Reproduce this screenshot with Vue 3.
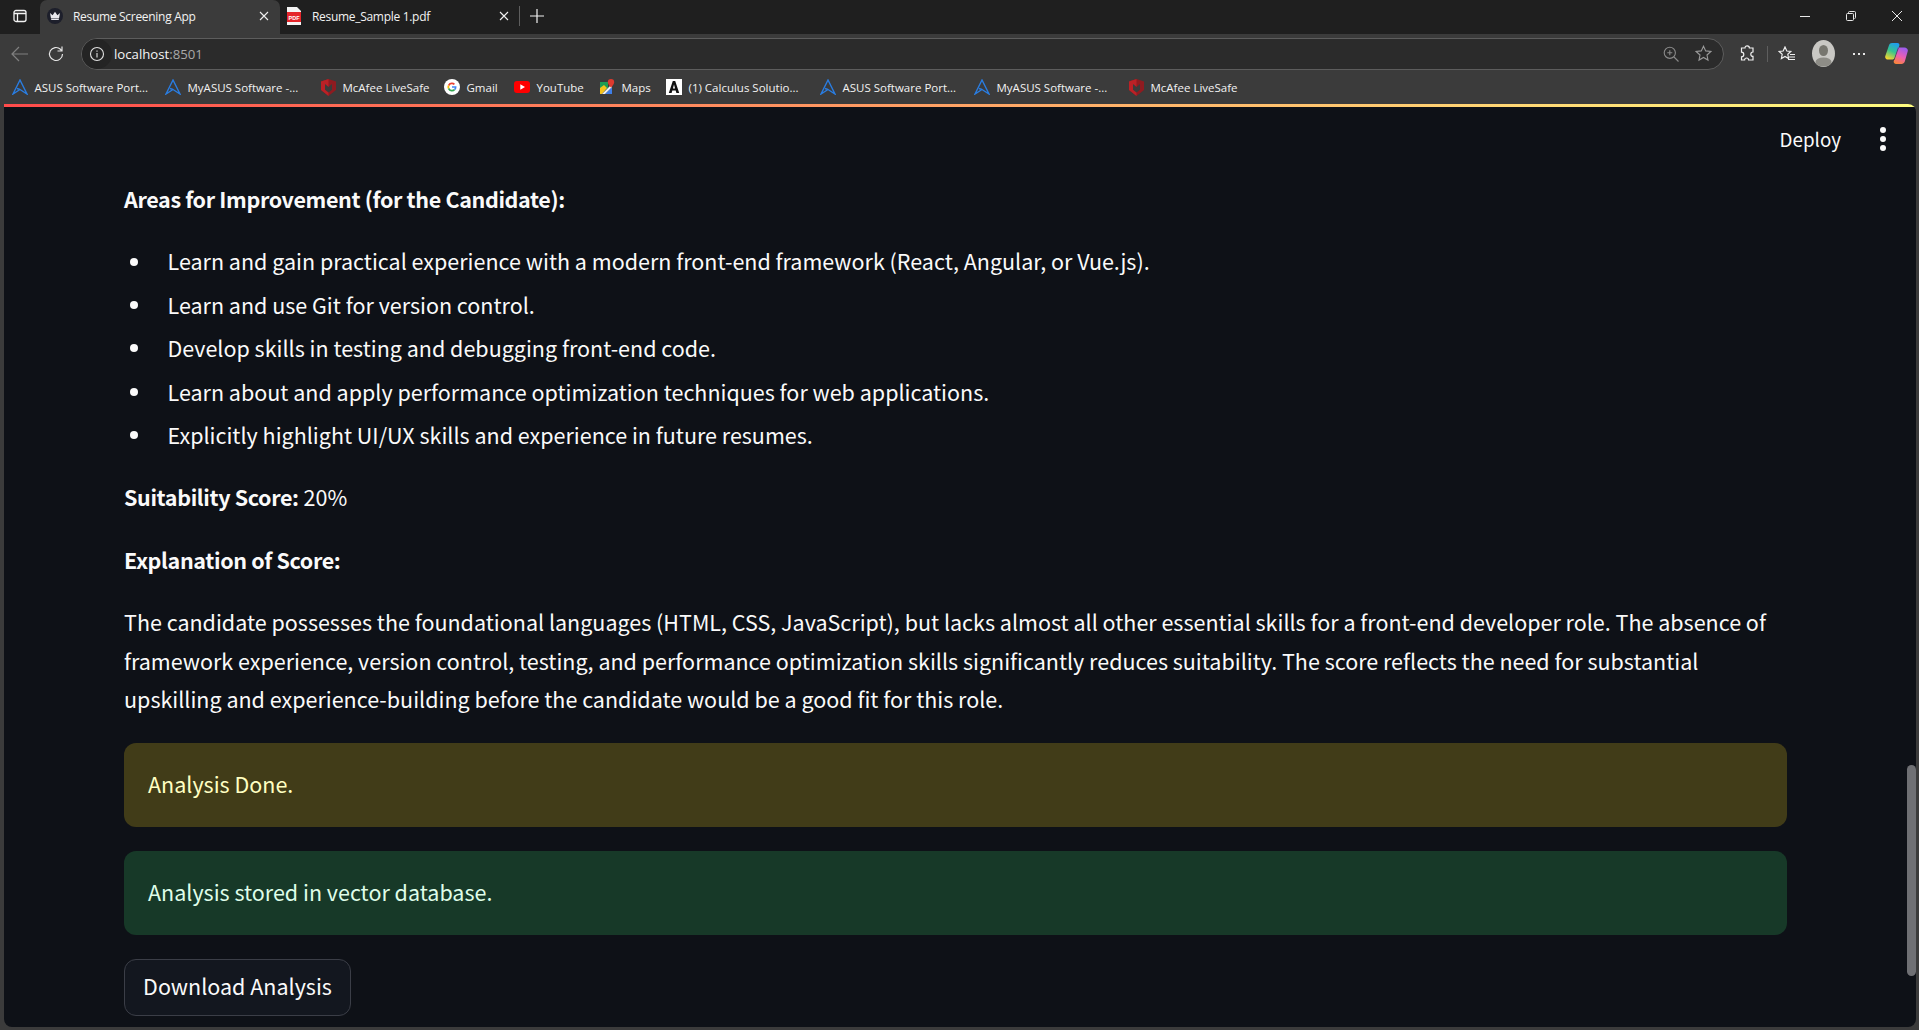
<template>
  <div class="window">
    <!-- tab strip -->
    <div class="tabstrip">
      <div class="tabmenu">
        <svg width="16" height="16" viewBox="0 0 16 16" fill="none" stroke="#f2f2f2" stroke-width="1.3"><rect x="2" y="2.500" width="12" height="11" rx="2"/><path d="M2 5.500h12M5.500 5.500v8" /></svg>
      </div>
      <div class="tab active">
        <span class="crown">
          <svg width="12" height="10" viewBox="0 0 12 10" fill="#e8e8ee"><path d="M1 2l2.600 2.200L6 .8l2.400 3.400L11 2l-1 5.400H2zM2.200 8h7.600v1H2.200z"/></svg>
        </span>
        <span class="tabtitle">Resume Screening App</span>
        <svg class="tabx" width="10" height="10" viewBox="0 0 10 10" stroke="#f0f0f0" stroke-width="1.1"><path d="M1 1l8 8M9 1l-8 8"/></svg>
      </div>
      <div class="tab">
        <svg width="16" height="18" viewBox="0 0 16 18"><path d="M1 0h10l4 4v14H1z" fill="#f4f4f4"/><rect x="1" y="5" width="14" height="10" fill="#e5252a"/><text x="8" y="12.600" class="pdftext" text-anchor="middle">PDF</text></svg>
        <span class="tabtitle">Resume_Sample 1.pdf</span>
        <svg class="tabx" width="10" height="10" viewBox="0 0 10 10" stroke="#f0f0f0" stroke-width="1.1"><path d="M1 1l8 8M9 1l-8 8"/></svg>
      </div>
      <div class="tabsep"></div>
      <svg class="newtab" width="14" height="14" viewBox="0 0 14 14" stroke="#f2f2f2" stroke-width="1.2"><path d="M7 0v14M0 7h14"/></svg>
      <div class="spacer"></div>
      <div class="winbtns">
        <svg width="10" height="10" viewBox="0 0 10 10" stroke="#e8e8e8"><path d="M0 5.500h10"/></svg>
        <svg width="10" height="10" viewBox="0 0 10 10" fill="none" stroke="#e8e8e8"><rect x=".5" y="2.500" width="7" height="7" rx="1"/><path d="M2.500 2.500V1.500q0-1 1-1h5q1 0 1 1v5q0 1-1 1"/></svg>
        <svg width="10" height="10" viewBox="0 0 10 10" stroke="#e8e8e8"><path d="M0 0l10 10M10 0L0 10"/></svg>
      </div>
    </div>

    <!-- address bar -->
    <div class="toolbar">
      <svg class="back" width="18" height="16" viewBox="0 0 18 16" fill="none" stroke="#808080" stroke-width="1.2"><path d="M17 8H1M8 1L1 8l7 7"/></svg>
      <svg class="reload" width="18" height="18" viewBox="0 0 18 18" fill="none" stroke="#e6e6e6" stroke-width="1.2"><path d="M15.500 9a6.500 6.500 0 1 1-2-4.700L15 6M15 1.500V6h-4.500"/></svg>
      <div class="addr">
        <span class="infoicon">
          <svg width="16" height="16" viewBox="0 0 16 16" fill="none" stroke="#e0e0e0" stroke-width="1.1"><circle cx="8" cy="8" r="6.500"/><path d="M8 7v4.500M8 4.500v1.200"/></svg>
        </span>
        <span class="url">localhost<span class="port">:8501</span></span>
        <div class="spacer"></div>
        <svg class="addricon" width="16" height="16" viewBox="0 0 16 16" fill="none" stroke="#8a8a8a" stroke-width="1.1"><circle cx="6.800" cy="6.800" r="5.600"/><path d="M11 11l4.500 4.500M4.300 6.800h5M6.800 4.300v5"/></svg>
        <svg class="addricon star" width="17" height="17" viewBox="0 0 17 17" fill="none" stroke="#9a9a9a" stroke-width="1.1"><path d="M8.500 1.200l2.200 4.700 5.100.6-3.800 3.500 1 5.100-4.500-2.600L4 15.100l1-5.100L1.200 6.500l5.100-.6z"/></svg>
      </div>
      <svg class="puzzle" width="16" height="18" viewBox="0 0 16 18" fill="none" stroke="#efefef" stroke-width="1.2"><path d="M6 3a2.200 2.200 0 0 1 4.400 0h3.600v4a2.200 2.200 0 0 0 0 4.400v3.600H9.600a2 2 0 0 0-4 0H2.500v-3.200a2.200 2.200 0 0 0 0-4.600V3z"/></svg>
      <div class="toolsep"></div>
      <svg class="favs" width="18" height="16" viewBox="0 0 18 16" fill="none" stroke="#efefef" stroke-width="1.2"><path d="M7 1l1.800 4 4 .5-3 2.800.8 4.200L7 10.400 3.400 12.500l.8-4.200-3-2.800 4-.5zM12 8.500h5M11 11h6M10 13.500h7"/></svg>
      <span class="avatar">
        <svg width="23" height="27" viewBox="0 0 23 27"><ellipse cx="11.500" cy="13.500" rx="11.500" ry="13.500" fill="#c9c8c4"/><ellipse cx="11.500" cy="10.500" rx="4.500" ry="5.500" fill="#77766f"/><ellipse cx="11.500" cy="22" rx="8" ry="4.500" fill="#8e8d87"/></svg>
      </span>
      <span class="dots"><i></i><i></i><i></i></span>
      <svg class="copilot" width="23" height="21" viewBox="0 0 23 21">
        <defs>
          <linearGradient id="cpa" x1="0.700" y1="0" x2="0.300" y2="1"><stop offset="0" stop-color="#1f9df0"/><stop offset="0.500" stop-color="#35c48f"/><stop offset="1" stop-color="#f3d52f"/></linearGradient>
          <linearGradient id="cpc" x1="0.700" y1="0" x2="0.300" y2="1"><stop offset="0" stop-color="#9a5cf0"/><stop offset="0.550" stop-color="#ee5fb0"/><stop offset="1" stop-color="#f8843c"/></linearGradient>
        </defs>
        <path d="M7 0h5.500c1.500 0 2.300 1.300 1.800 2.700L10 14.500c-.5 1.400-1.500 2-3 2H3c-2 0-3.300-1.700-2.700-3.500L4 2.300C4.500.8 5.500 0 7 0z" fill="url(#cpa)"/>
        <path d="M13 4.500h6.500c2 0 3.700 1.700 3.300 3.500l-3 10.500c-.5 1.600-1.700 2.500-3.300 2.500h-5.500c-1.700 0-2.700-1.400-2.200-3L13 4.500z" fill="url(#cpc)"/>
        <path d="M13 4.500l-4 11.500c-.3.500-1 .5-1.300.5l1.800.4L13.800 5z" fill="#23304f" opacity="0.700"/>
      </svg>
    </div>

    <!-- bookmarks -->
    <div class="bookmarks">
      <div v-for="b in bookmarks" :key="b.id" class="bm" :style="{ width: b.w + 'px' }">
        <svg v-if="b.icon === 'asus'" width="16" height="16" viewBox="0 0 16 16" fill="none" stroke="#2a7de1" stroke-width="1.4"><path d="M8 1L1 15l7-4.500L15 15zM5 9.500L8 10.500"/></svg>
        <svg v-else-if="b.icon === 'mcafee'" width="15" height="17" viewBox="0 0 15 17"><path d="M0 2.500L7.500 0 15 2.500V11l-7.500 6L0 11z" fill="#8f1b20"/><path d="M0 2.500L7.500 0v17L0 11z" fill="#bb2126"/><path d="M4 5l3.500 3L11 5v5.800l-3.500 2.800L4 10.800z" fill="#3b3b3b"/></svg>
        <svg v-else-if="b.icon === 'gmail'" width="16" height="16" viewBox="0 0 16 16"><circle cx="8" cy="8" r="8" fill="#fff"/><path d="M8 3.500a4.500 4.500 0 0 1 3 1.200l-1.200 1.200A2.800 2.800 0 0 0 5.400 7L3.900 5.900A4.500 4.500 0 0 1 8 3.500z" fill="#ea4335"/><path d="M3.900 5.900L5.400 7a2.900 2.900 0 0 0 0 2L3.900 10.100a4.500 4.500 0 0 1 0-4.200z" fill="#fbbc05"/><path d="M5.400 9A2.800 2.800 0 0 0 10 10l1.300 1.100A4.500 4.500 0 0 1 3.900 10.100z" fill="#34a853"/><path d="M12.500 8c0 1.300-.4 2.300-1.200 3.100L10 10c.4-.3.700-.7.800-1.300H8V7.200h4.400z" fill="#4285f4"/></svg>
        <svg v-else-if="b.icon === 'youtube'" width="16" height="12" viewBox="0 0 16 12"><rect width="16" height="12" rx="3" fill="#f00"/><path d="M6.300 3.300v5.400L11 6z" fill="#fff"/></svg>
        <svg v-else-if="b.icon === 'maps'" width="16" height="16" viewBox="0 0 16 16"><path d="M1 3h8v6l-8 6z" fill="#1f9d55"/><path d="M1 9l4-3 3 3-5 6H1z" fill="#f6c31c"/><path d="M6 15l7-7v7z" fill="#3f7fe8"/><path d="M3 15L13 5v3l-7 7z" fill="#f1f1f1"/><path d="M12 0a3.200 3.200 0 0 1 3.200 3.200C15.200 5.300 12 8.500 12 8.500S8.800 5.300 8.800 3.200A3.200 3.200 0 0 1 12 0z" fill="#dd3a2e"/></svg>
        <svg v-else-if="b.icon === 'calc'" width="16" height="16" viewBox="0 0 16 16"><rect width="16" height="16" fill="#fff"/><path d="M6.800 2h2.400l4 12H10.400l-.7-2.400H6.300L5.600 14H2.800zM6.900 9.500h2.200L8 5.500z" fill="#111"/></svg>
        <span>{{ b.label }}</span>
      </div>
    </div>

    <!-- streamlit page -->
    <div class="frame">
      <div class="decoration"></div>
      <header class="apphead">
        <span class="deploy">Deploy</span>
        <span class="kebab"><i></i><i></i><i></i></span>
      </header>
      <main class="content">
        <p><strong>Areas for Improvement (for the Candidate):</strong></p>
        <ul>
          <li v-for="item in improvements" :key="item">{{ item }}</li>
        </ul>
        <p><strong>Suitability Score:</strong> 20%</p>
        <p><strong>Explanation of Score:</strong></p>
        <p class="last">The candidate possesses the foundational languages (HTML, CSS, JavaScript), but lacks almost all other essential skills for a front-end developer role. The absence of framework experience, version control, testing, and performance optimization skills significantly reduces suitability. The score reflects the need for substantial upskilling and experience-building before the candidate would be a good fit for this role.</p>
        <div class="alert warn">Analysis Done.</div>
        <div class="alert ok">Analysis stored in vector database.</div>
        <button class="dl">Download Analysis</button>
      </main>
      <div class="scrollthumb"></div>
    </div>
  </div>
</template>

<script setup>
// w = slot width of each bookmark in the bar
const bookmarks = [
  { id: 1, icon: 'asus', label: 'ASUS Software Port...', w: 153 },
  { id: 2, icon: 'asus', label: 'MyASUS Software -...', w: 156 },
  { id: 3, icon: 'mcafee', label: 'McAfee LiveSafe', w: 123 },
  { id: 4, icon: 'gmail', label: 'Gmail', w: 70 },
  { id: 5, icon: 'youtube', label: 'YouTube', w: 85 },
  { id: 6, icon: 'maps', label: 'Maps', w: 67 },
  { id: 7, icon: 'calc', label: '(1) Calculus Solutio...', w: 154 },
  { id: 8, icon: 'asus', label: 'ASUS Software Port...', w: 154 },
  { id: 9, icon: 'asus', label: 'MyASUS Software -...', w: 155 },
  { id: 10, icon: 'mcafee', label: 'McAfee LiveSafe', w: 123 }
]

const improvements = [
  'Learn and gain practical experience with a modern front-end framework (React, Angular, or Vue.js).',
  'Learn and use Git for version control.',
  'Develop skills in testing and debugging front-end code.',
  'Learn about and apply performance optimization techniques for web applications.',
  'Explicitly highlight UI/UX skills and experience in future resumes.'
]
</script>

<style>
html, body {
  margin: 0;
  overflow: hidden;
  background: #3b3b3b;
}
</style>

<style scoped>
.window {
  width: 1919px;
  height: 1030px;
  display: flex;
  flex-direction: column;
  background: #3b3b3b;
  font-family: "Open Sans", "Noto Sans", sans-serif;
  overflow: hidden;
}

.spacer {
  flex: 1;
}

/* tabs */
.tabstrip {
  height: 34px;
  box-sizing: border-box;
  padding-bottom: 2px;
  flex: none;
  display: flex;
  align-items: center;
  background: #1f1f1f;
  color: #f2f2f2;
  font-size: 12px;
}
.tabmenu {
  width: 40px;
  display: flex;
  justify-content: center;
}
.tab {
  width: 240px;
  height: 34px;
  margin-bottom: -2px;
  box-sizing: border-box;
  display: flex;
  align-items: center;
  padding: 0 10px 2px 8px;
}
.tab.active {
  background: #3b3b3b;
  border-radius: 7px 7px 0 0;
  padding-left: 7px;
}
.tab:not(.active) {
  padding-left: 6px;
}
.crown {
  width: 16px;
  height: 16px;
  border-radius: 50%;
  background: #1d1f2b;
  display: flex;
  align-items: center;
  justify-content: center;
}
.tabtitle {
  margin-left: 10px;
  flex: 1;
  letter-spacing: -0.3px;
}
.tabx {
  margin-right: 1px;
}
.pdftext {
  font: 700 5.500px "Liberation Sans", sans-serif;
  fill: #fff;
}
.tabsep {
  width: 1px;
  height: 20px;
  background: #5e5e5e;
  margin-left: -1px;
}
.newtab {
  margin-left: 10px;
}
.winbtns {
  display: flex;
  gap: 36px;
  margin-right: 17px;
}

/* address bar */
.toolbar {
  height: 36px;
  box-sizing: border-box;
  padding-top: 3px;
  flex: none;
  display: flex;
  align-items: center;
  background: #3b3b3b;
}
.back {
  margin-left: 11px;
}
.reload {
  margin-left: 18px;
}
.addr {
  width: 1643px;
  height: 32px;
  box-sizing: border-box;
  margin-left: 16px;
  display: flex;
  align-items: center;
  background: #2b2b2b;
  border: 1px solid #5d5d5d;
  border-radius: 16px;
}
.infoicon {
  width: 30px;
  height: 30px;
  border-radius: 50%;
  background: #242424;
  display: flex;
  align-items: center;
  justify-content: center;
}
.url {
  margin-left: 2px;
  font-size: 13.200px;
  color: #f4f4f4;
}
.port {
  color: #a8a8a8;
}
.addricon {
  margin-right: 16px;
}
.star {
  margin-right: 11px;
}
.puzzle {
  margin-left: 15px;
}
.toolsep {
  width: 1px;
  height: 16px;
  background: #5e5e5e;
  margin-left: 12px;
}
.favs {
  margin-left: 10px;
}
.avatar {
  margin-left: 16px;
  display: flex;
}
.dots {
  display: flex;
  gap: 3px;
  margin-left: 18px;
}
.dots i {
  width: 2px;
  height: 2px;
  background: #e8e8e8;
}
.copilot {
  margin-left: 20px;
}

/* bookmarks */
.bookmarks {
  height: 34px;
  flex: none;
  display: flex;
  align-items: center;
  padding-left: 12px;
  color: #f2f2f2;
  font-size: 11.500px;
}
.bm {
  display: flex;
  align-items: center;
  gap: 6.500px;
  white-space: nowrap;
}

/* page */
.frame {
  position: relative;
  flex: 1;
  margin: 0 3px 3px 4px;
  background: #0e1117;
  border-radius: 0 8px 8px 8px;
  overflow: hidden;
  color: #fafafa;
  font-family: "Noto Sans CJK SC", "Noto Sans", sans-serif;
  font-size: 21.500px;
  line-height: 38.400px;
}
.decoration {
  height: 3px;
  background: linear-gradient(90deg, #ff4b4b, #fffd80);
}
.apphead {
  position: absolute;
  top: 16px;
  right: 30px;
  display: flex;
  align-items: center;
  gap: 39px;
  font-size: 18.800px;
}
.kebab {
  display: flex;
  flex-direction: column;
  gap: 3px;
}
.kebab i {
  width: 6px;
  height: 6px;
  border-radius: 50%;
  background: #fafafa;
}
.content {
  width: 1663px;
  padding: 73px 0 0 120px;
}
p {
  margin: 0 0 24px;
}
p.last {
  margin-bottom: 25px;
}
strong {
  font-weight: 700;
  letter-spacing: -0.35px;
}
ul {
  margin: 0 0 24px;
  padding: 0;
  list-style: none;
}
li {
  display: flex;
  align-items: center;
  margin-bottom: 5px;
}
li::before {
  content: "";
  flex: none;
  width: 8px;
  height: 8px;
  margin: 0 29.500px 0 6px;
  border-radius: 50%;
  background: #fafafa;
}
li:last-child {
  margin-bottom: 0;
}
.alert {
  height: 84px;
  box-sizing: border-box;
  display: flex;
  align-items: center;
  padding: 0 24px 3px;
  margin-bottom: 24px;
  border-radius: 12px;
}
.warn {
  background: #413c18;
  color: #ffffc2;
}
.ok {
  background: #173928;
  color: #dffde9;
}
.dl {
  width: 227px;
  height: 57px;
  padding: 0 0 3px;
  background: #13171f;
  border: 1px solid #3b3e47;
  border-radius: 12px;
  color: #fafafa;
  font: inherit;
}
.scrollthumb {
  position: absolute;
  top: 661px;
  right: 0;
  width: 9px;
  height: 211px;
  border-radius: 5px;
  background: #6f7074;
}
</style>
